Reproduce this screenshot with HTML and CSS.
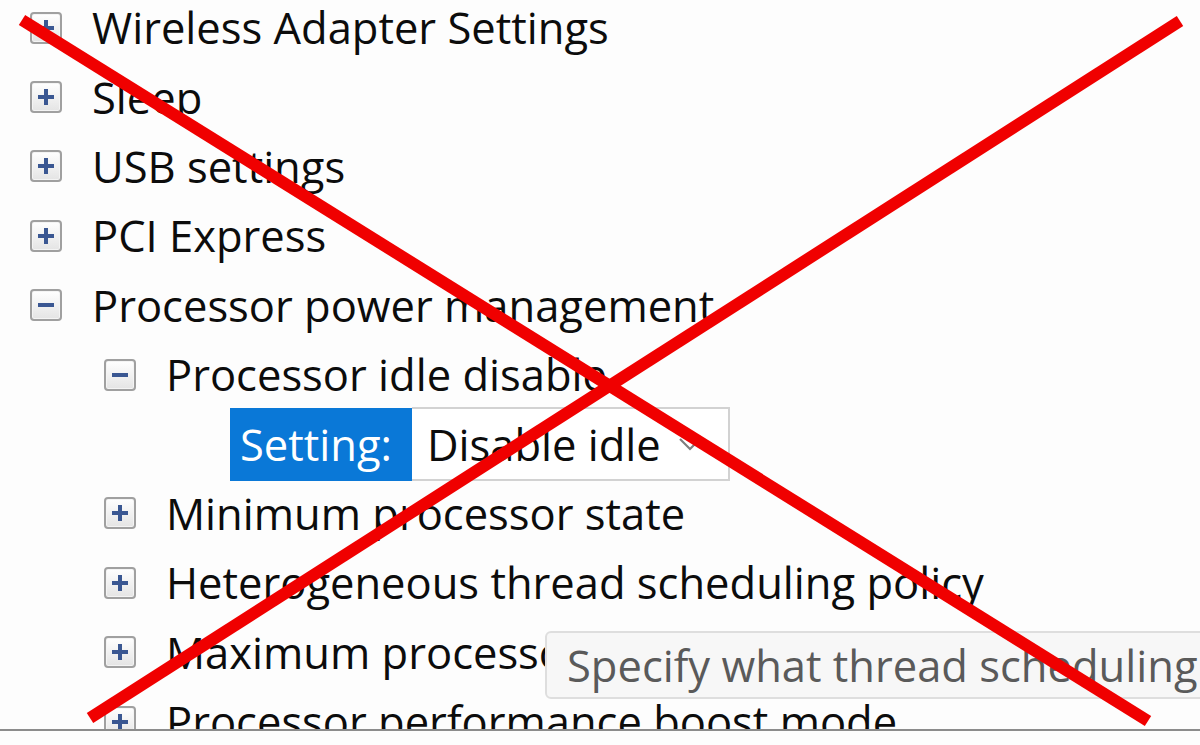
FILE: index.html
```html
<!DOCTYPE html>
<html>
<head>
<meta charset="utf-8">
<link rel="stylesheet" href="styles.css">
</head>
<body>
<div class="frame">
  <div class="tree">
    <div class="row l1"><span class="box plus"></span><span class="label">Wireless Adapter Settings</span></div>
    <div class="row l1"><span class="box plus"></span><span class="label">Sleep</span></div>
    <div class="row l1"><span class="box plus"></span><span class="label">USB settings</span></div>
    <div class="row l1"><span class="box plus"></span><span class="label">PCI Express</span></div>
    <div class="row l1"><span class="box minus"></span><span class="label">Processor power management</span></div>
    <div class="row l2"><span class="box minus"></span><span class="label">Processor idle disable</span></div>
    <div class="row setting">
      <span class="setting-label">Setting:</span>
      <span class="select"><span class="select-value">Disable idle</span><svg class="chev" width="24" height="16" viewBox="0 0 24 16"><path d="M2 3 L12 13 L22 3" fill="none" stroke="#7e7e7e" stroke-width="2.2"/></svg></span>
    </div>
    <div class="row l2"><span class="box plus"></span><span class="label">Minimum processor state</span></div>
    <div class="row l2"><span class="box plus"></span><span class="label">Heterogeneous thread scheduling policy</span></div>
    <div class="row l2"><span class="box plus"></span><span class="label">Maximum processor state</span></div>
    <div class="row l2"><span class="box plus"></span><span class="label">Processor performance boost mode</span></div>
  </div>
  <div class="tooltip">Specify what thread scheduling policy to use.</div>
  <svg class="cross" width="1200" height="745" viewBox="0 0 1200 745">
    <line x1="22" y1="20" x2="1148" y2="721" stroke="#f00000" stroke-width="12"/>
    <line x1="1180" y1="21" x2="90" y2="718" stroke="#f00000" stroke-width="12"/>
  </svg>
</div>
</body>
</html>
```
FILE: styles.css
```css
html, body {
  margin: 0;
  padding: 0;
  background: #fdfdfd;
}
.frame {
  position: relative;
  width: 1200px;
  height: 745px;
  overflow: hidden;
  font-family: "Open Sans", "Noto Sans", "DejaVu Sans", sans-serif;
}
.tree {
  height: 731px;
  overflow: hidden;
  border-bottom: 2px solid #8c8c8c;
  box-sizing: border-box;
  background: #fdfdfd;
}
.tree > .row:first-child {
  margin-top: -7px;
}
.row {
  display: flex;
  align-items: center;
  height: 69.4px;
  font-size: 43.5px;
  color: #0c0c0c;
  white-space: nowrap;
}
.l1 { padding-left: 30px; }
.l2 { padding-left: 104px; }
.box {
  position: relative;
  width: 28px;
  height: 28px;
  border: 2px solid #a0a0a0;
  border-radius: 4px;
  background: linear-gradient(#ffffff, #e4e4e4);
  flex: none;
  margin-right: 30px;
  box-shadow: inset 0 0 0 1px #f4f4f4;
}
.box::before {
  content: "";
  position: absolute;
  left: 6px;
  top: 12px;
  width: 16px;
  height: 4px;
  background: #3a5792;
}
.plus::after {
  content: "";
  position: absolute;
  left: 12px;
  top: 6px;
  width: 4px;
  height: 16px;
  background: #3a5792;
}
.setting {
  padding-left: 230px;
}
.setting-label {
  background: #0a78d7;
  color: #ffffff;
  height: 73px;
  width: 182px;
  box-sizing: border-box;
  padding-left: 10px;
  display: flex;
  align-items: center;
}
.select {
  display: flex;
  align-items: center;
  height: 74px;
  width: 318px;
  box-sizing: border-box;
  border: 2px solid #d2d2d2;
  border-left: none;
  background: #ffffff;
  padding-left: 15px;
}
.select-value {
  flex: 1;
}
.chev {
  margin-right: 26px;
}
.tooltip {
  position: absolute;
  left: 545px;
  top: 631px;
  width: 800px;
  height: 68px;
  box-sizing: border-box;
  border: 2px solid #dedede;
  border-radius: 6px;
  background: #f7f7f7;
  color: #5a5a5a;
  font-size: 43.5px;
  padding-left: 20px;
  display: flex;
  align-items: center;
  white-space: nowrap;
}
.cross {
  position: absolute;
  left: 0;
  top: 0;
  pointer-events: none;
}
```
